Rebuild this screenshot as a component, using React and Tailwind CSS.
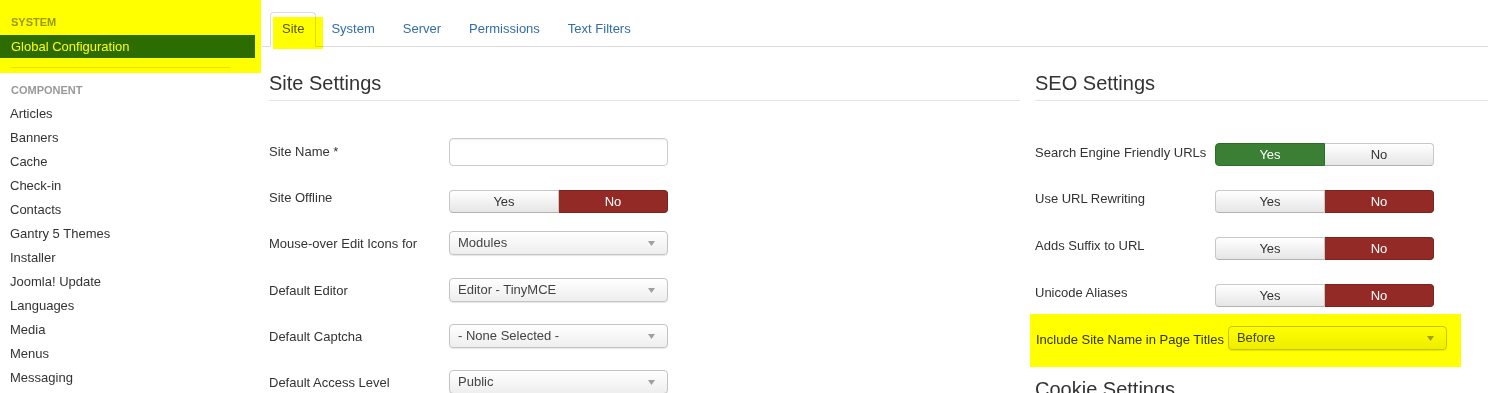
import React from 'react';

const components = [
  'Articles',
  'Banners',
  'Cache',
  'Check-in',
  'Contacts',
  'Gantry 5 Themes',
  'Installer',
  'Joomla! Update',
  'Languages',
  'Media',
  'Menus',
  'Messaging',
];

const tabs = ['Site', 'System', 'Server', 'Permissions', 'Text Filters'];

function Toggle({ value }) {
  const yesOn = value === 'yes';
  return (
    <div className="flex h-[23px] w-[219px] shrink-0 text-[13px]">
      <div
        className={
          yesOn
            ? 'flex flex-1 items-center justify-center rounded-l-[4px] border border-[#2f6b2a] bg-[#3a7f34] text-white'
            : 'flex flex-1 items-center justify-center rounded-l-[4px] border border-[#c8c8c8] border-b-[#b3b3b3] bg-linear-to-b from-white to-[#e6e6e6] text-[#333]'
        }
      >
        Yes
      </div>
      <div
        className={
          yesOn
            ? 'flex flex-1 items-center justify-center rounded-r-[4px] border border-l-0 border-[#c8c8c8] border-b-[#b3b3b3] bg-linear-to-b from-white to-[#e6e6e6] text-[#333]'
            : 'flex flex-1 items-center justify-center rounded-r-[4px] border border-l-0 border-[#7d231f] bg-[#942a25] text-white'
        }
      >
        No
      </div>
    </div>
  );
}

function Select({ value }) {
  return (
    <div className="flex h-[24px] w-[219px] shrink-0 items-center rounded-[4px] border border-[#c4c4c4] bg-linear-to-b from-white to-[#eeeeee] pl-[8px] pr-[12px] text-[13px] text-[#444] shadow-[0_1px_1px_rgba(0,0,0,0.1)]">
      <span>{value}</span>
      <svg className="ml-auto" width="7" height="5" viewBox="0 0 7 5">
        <polygon points="0,0 7,0 3.5,5" fill="#a0a0a0" />
      </svg>
    </div>
  );
}

function Heading({ children, className }) {
  return (
    <h3 className={'border-b border-[#e5e5e5] pb-[5px] text-[20px] leading-[24px] font-normal text-[#333] ' + className}>
      {children}
    </h3>
  );
}

export default function App() {
  return (
    <div className="relative flex h-[393px] w-[1488px] overflow-hidden bg-white font-['Liberation_Sans',Arial,sans-serif] text-[13px] text-[#333]">
      {/* Sidebar */}
      <aside className="w-[262px] shrink-0 pt-[13px]">
        <div className="h-[18px] pl-[11px] text-[11px] leading-[18px] font-bold text-[#999]">SYSTEM</div>
        <div className="mt-[4px] h-[23px] w-[255px] bg-[#2d6ca2] pl-[11px] leading-[23px] text-white">
          Global Configuration
        </div>
        <div className="mt-[9px] ml-[11px] h-px w-[219px] bg-[#e3e3e3]" />
        <div className="mt-[13px] h-[18px] pl-[11px] text-[11px] leading-[18px] font-bold text-[#999]">COMPONENT</div>
        <ul className="mt-[3px]">
          {components.map((c) => (
            <li key={c} className="h-[24px] pl-[10px] leading-[24px] text-[#333]">
              {c}
            </li>
          ))}
        </ul>
      </aside>

      {/* Main */}
      <main className="min-w-0 flex-1">
        <div className="flex h-[47px] items-end border-b border-[#ddd] pl-[8px]">
          {tabs.map((t, i) => (
            <div
              key={t}
              className={
                i === 0
                  ? '-mb-px mr-[2px] h-[35px] rounded-t-[4px] border border-[#ddd] border-b-white bg-white px-[11px] leading-[31px] text-[#555]'
                  : '-mb-px mr-[2px] h-[35px] rounded-t-[4px] border border-transparent px-[12px] leading-[31px] text-[#336ea8]'
              }
            >
              {t}
            </div>
          ))}
        </div>

        <div className="flex pl-[7px]">
          {/* Site Settings */}
          <section className="w-[751px] shrink-0">
            <Heading className="mt-[24px]">Site Settings</Heading>

            <div className="mt-[37px] flex h-[52px] items-start">
              <label className="mt-[5px] w-[180px] leading-[18px]">Site Name *</label>
              <div className="h-[28px] w-[219px] rounded-[4px] border border-[#ccc] bg-white shadow-[inset_0_1px_1px_rgba(0,0,0,0.075)]" />
            </div>
            <div className="flex h-[41px] items-start">
              <label className="-mt-[1px] w-[180px] leading-[18px]">Site Offline</label>
              <Toggle value="no" />
            </div>
            <div className="flex h-[47px] items-start">
              <label className="mt-[4px] w-[180px] leading-[18px]">Mouse-over Edit Icons for</label>
              <Select value="Modules" />
            </div>
            <div className="flex h-[46px] items-start">
              <label className="mt-[4px] w-[180px] leading-[18px]">Default Editor</label>
              <Select value="Editor - TinyMCE" />
            </div>
            <div className="flex h-[46px] items-start">
              <label className="mt-[4px] w-[180px] leading-[18px]">Default Captcha</label>
              <Select value="- None Selected -" />
            </div>
            <div className="flex h-[46px] items-start">
              <label className="mt-[4px] w-[180px] leading-[18px]">Default Access Level</label>
              <Select value="Public" />
            </div>
          </section>

          {/* SEO Settings */}
          <section className="ml-[15px] w-[470px] shrink-0">
            <Heading className="mt-[24px]">SEO Settings</Heading>

            <div className="mt-[42px] flex h-[47px] items-start">
              <label className="mt-[1px] w-[180px] leading-[18px]">Search Engine Friendly URLs</label>
              <Toggle value="yes" />
            </div>
            <div className="flex h-[47px] items-start">
              <label className="w-[180px] leading-[18px]">Use URL Rewriting</label>
              <Toggle value="no" />
            </div>
            <div className="flex h-[47px] items-start">
              <label className="w-[180px] leading-[18px]">Adds Suffix to URL</label>
              <Toggle value="no" />
            </div>
            <div className="flex h-[42px] items-start">
              <label className="w-[180px] leading-[18px]">Unicode Aliases</label>
              <Toggle value="no" />
            </div>
            <div className="flex h-[24px] items-start">
              <label className="mt-[5px] pl-[1px] pr-[4px] whitespace-nowrap leading-[18px]">Include Site Name in Page Titles</label>
              <Select value="Before" />
            </div>

            <Heading className="mt-[27px]">Cookie Settings</Heading>
          </section>
        </div>
      </main>

      {/* Highlighter marks */}
      <div className="pointer-events-none absolute top-0 left-0 h-[73px] w-[261px] bg-[#ffff00] mix-blend-multiply" />
      <div className="pointer-events-none absolute top-[17px] left-[273px] h-[32px] w-[50px] bg-[#ffff00] mix-blend-multiply" />
      <div className="pointer-events-none absolute top-[314px] left-[1030px] h-[53px] w-[431px] bg-[#ffff00] mix-blend-multiply" />
    </div>
  );
}
